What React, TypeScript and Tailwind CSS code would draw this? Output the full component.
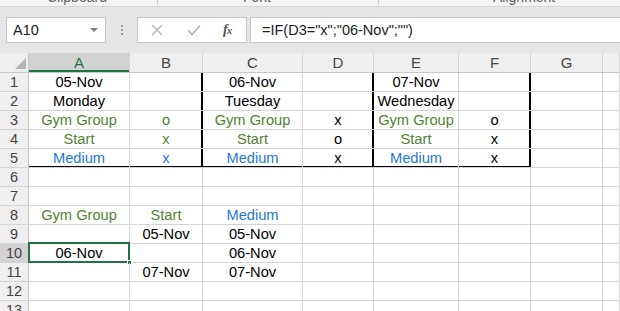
import React from "react";

const GREEN = "text-[#548235]";
const BLUE = "text-[#1f78d6]";

type Cell = { v: string; c?: string };

const cols = ["A", "B", "C", "D", "E", "F", "G", "H"];
const colW = ["w-[101px]", "w-[73px]", "w-[100px]", "w-[71px]", "w-[85px]", "w-[72px]", "w-[72px]", "flex-1"];

const data: Record<number, Record<string, Cell>> = {
  1: { A: { v: "05-Nov" }, C: { v: "06-Nov" }, E: { v: "07-Nov" } },
  2: { A: { v: "Monday" }, C: { v: "Tuesday" }, E: { v: "Wednesday" } },
  3: {
    A: { v: "Gym Group", c: GREEN },
    B: { v: "o", c: GREEN },
    C: { v: "Gym Group", c: GREEN },
    D: { v: "x" },
    E: { v: "Gym Group", c: GREEN },
    F: { v: "o" },
  },
  4: {
    A: { v: "Start", c: GREEN },
    B: { v: "x", c: GREEN },
    C: { v: "Start", c: GREEN },
    D: { v: "o" },
    E: { v: "Start", c: GREEN },
    F: { v: "x" },
  },
  5: {
    A: { v: "Medium", c: BLUE },
    B: { v: "x", c: BLUE },
    C: { v: "Medium", c: BLUE },
    D: { v: "x" },
    E: { v: "Medium", c: BLUE },
    F: { v: "x" },
  },
  8: { A: { v: "Gym Group", c: GREEN }, B: { v: "Start", c: GREEN }, C: { v: "Medium", c: BLUE } },
  9: { B: { v: "05-Nov" }, C: { v: "05-Nov" } },
  10: { A: { v: "06-Nov" }, C: { v: "06-Nov" } },
  11: { B: { v: "07-Nov" }, C: { v: "07-Nov" } },
};

// thick border edges (drawn as inset shadows on the cell)
function edge(row: number, col: string) {
  if (row < 1 || row > 5) return "";
  const right = col === "B" || col === "D" || col === "F";
  const bottom = row === 5 && "ABCDEF".includes(col);
  if (right && bottom) return "border-r-black border-b-black shadow-[inset_-1px_-1px_0_#000]";
  if (right) return "border-r-black shadow-[inset_-1px_0_0_#000]";
  if (bottom) return "border-b-black shadow-[inset_0_-1px_0_#000]";
  return "";
}

function Ribbon() {
  return (
    <div className="h-[7px] overflow-hidden bg-[#f3f3f3] border-b border-[#d6d6d6] text-[14px] text-[#666]">
      <div className="flex -mt-[11px] leading-[16px]">
        <span className="ml-[47px] w-[95px]">Clipboard</span>
        <span className="w-[10px] text-[10px]">⌐</span>
        <span className="ml-[5px] w-px h-[16px] bg-[#d0d0d0]" />
        <span className="ml-[85px] w-[120px]">Font</span>
        <span className="w-[10px] text-[10px]">⌐</span>
        <span className="ml-[5px] w-px h-[16px] bg-[#d0d0d0]" />
        <span className="ml-[114px]">Alignment</span>
      </div>
    </div>
  );
}

function FormulaBar() {
  return (
    <div className="h-[46px] bg-[#e6e6e6] flex items-start pt-[10px] pl-[6px]">
      <div className="w-[100px] h-[26px] bg-white border border-[#c6c6c6] flex items-center pl-[6px] pr-[7px]">
        <span className="flex-1 text-[14.5px] text-[#222]">A10</span>
        <span className="w-0 h-0 border-l-[4px] border-r-[4px] border-t-[4px] border-l-transparent border-r-transparent border-t-[#808080]" />
      </div>
      <div className="w-[31px] h-[26px] flex flex-col items-center justify-center gap-[2px]">
        <span className="w-[2px] h-[2px] bg-[#a0a0a0]" />
        <span className="w-[2px] h-[2px] bg-[#a0a0a0]" />
        <span className="w-[2px] h-[2px] bg-[#a0a0a0]" />
      </div>
      <div className="w-[110px] h-[26px] bg-white border border-[#c6c6c6] flex items-center">
        <svg width="14" height="14" viewBox="0 0 14 14" className="ml-[12px]">
          <path d="M2 2 L12 12 M12 2 L2 12" stroke="#b4b4b4" strokeWidth="1.4" fill="none" />
        </svg>
        <svg width="16" height="14" viewBox="0 0 16 14" className="ml-[22px]">
          <path d="M2 7 L6 11.5 L14 2.5" stroke="#b4b4b4" strokeWidth="1.6" fill="none" />
        </svg>
        <span className="ml-[21px] text-[14px] italic text-[#555] font-['Liberation_Serif',serif] font-bold tracking-[-1px]">
          f<span className="text-[11px]">x</span>
        </span>
      </div>
      <div className="ml-[3px] flex-1 h-[26px] bg-white border border-r-0 border-[#c6c6c6] flex items-center pl-[11px] text-[14.5px] text-[#222] whitespace-nowrap">
        =IF(D3="x";"06-Nov";"")
      </div>
    </div>
  );
}

function HeaderRow() {
  return (
    <div className="flex h-[20px] bg-[#efefef] border-b border-[#c8c8c8]">
      <div className="w-[29px] shrink-0 border-r border-[#c8c8c8] flex items-end justify-end pr-[2px] pb-[3px]">
        <svg width="11" height="11" viewBox="0 0 11 11">
          <path d="M11 0 L11 11 L0 11 Z" fill="#b4b4b4" />
        </svg>
      </div>
      {cols.map((c, i) => (
        <div
          key={c}
          className={
            colW[i] +
            " shrink-0 border-r border-[#d4d4d4] flex items-center justify-center text-[15px] " +
            (c === "A"
              ? "bg-[#d2d2d2] text-[#217346] shadow-[inset_0_-2px_0_#217346]"
              : "text-[#444]")
          }
        >
          {c === "H" ? "" : c}
        </div>
      ))}
    </div>
  );
}

function Row({ n }: { n: number }) {
  const row = data[n] ?? {};
  return (
    <div className="flex h-[19px] shrink-0 border-b border-[#d4d4d4]">
      <div
        className={
          "w-[29px] shrink-0 border-r border-[#c8c8c8] flex items-center justify-center text-[14.5px] text-[#444] " +
          (n === 10 ? "bg-[#d2d2d2]" : "bg-[#efefef]")
        }
      >
        {n}
      </div>
      {cols.map((c, i) => {
        const cell = row[c];
        const sel = n === 10 && c === "A";
        return (
          <div
            key={c}
            className={
              colW[i] +
              " shrink-0 relative border-r border-[#d4d4d4] flex items-center justify-center text-[14.67px] whitespace-nowrap " +
              (cell?.c ?? "text-black") +
              " " +
              edge(n, c)
            }
          >
            {cell?.v}
            {sel && (
              <>
                <div className="absolute -left-[1px] -top-[2px] -right-[1px] -bottom-[1px] border-2 border-[#217346]" />
                <div className="absolute -right-[3px] -bottom-[3px] w-[5px] h-[5px] bg-[#217346] border border-white" />
              </>
            )}
          </div>
        );
      })}
    </div>
  );
}

export default function App() {
  const rows = Array.from({ length: 13 }, (_, i) => i + 1);
  return (
    <div className="w-[620px] h-[311px] overflow-hidden bg-white font-['Liberation_Sans',Arial,sans-serif] leading-none">
      <Ribbon />
      <FormulaBar />
      <HeaderRow />
      {rows.map((n) => (
        <Row key={n} n={n} />
      ))}
    </div>
  );
}
